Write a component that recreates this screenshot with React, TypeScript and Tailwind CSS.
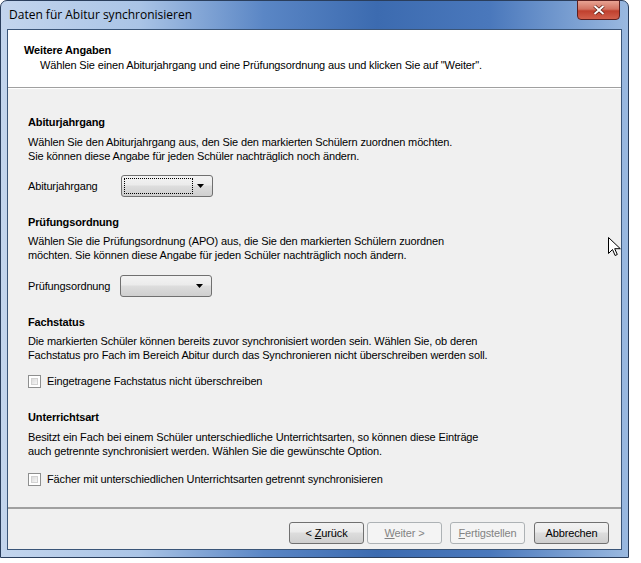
import React from "react";

const font = { fontFamily: '"Liberation Sans", Arial, sans-serif', letterSpacing: "-0.14px" };

function Combo({ focused }: { focused?: boolean }) {
  return (
    <div className="flex h-[22px] w-[92px] items-center rounded-[3px] border border-[#707070] bg-[linear-gradient(#f3f3f3,#ebebeb_45%,#dddddd_50%,#cfcfcf)] p-[2px]">
      <div className={`h-full flex-1 ${focused ? "border border-dotted border-black" : ""}`} />
      <svg width="17" height="16" viewBox="0 0 17 16">
        <path d="M4 6h7l-3.5 4z" fill="#000" />
      </svg>
    </div>
  );
}

function Check({ label }: { label: string }) {
  return (
    <div className="flex h-[14px] items-center gap-[6px]">
      <div className="h-[13px] w-[13px] border border-[#8e8f8f] bg-white p-[2px]">
        <div className="h-full w-full border border-[#d2d2d2] bg-[linear-gradient(135deg,#dcdcdc,#f6f6f6)]" />
      </div>
      <span>{label}</span>
    </div>
  );
}

function Button({ children, disabled, className = "" }: { children: React.ReactNode; disabled?: boolean; className?: string }) {
  return (
    <div
      className={`flex h-[22px] w-[75px] items-center justify-center rounded-[3px] border ${className} ${
        disabled
          ? "border-[#adb2b5] bg-[#f4f4f4] text-[#838383]"
          : "border-[#707070] bg-[linear-gradient(#f2f2f2,#ebebeb_45%,#dddddd_50%,#cfcfcf)] text-black"
      }`}
    >
      {children}
    </div>
  );
}

export default function App() {
  return (
    <div className="relative h-[563px] w-[641px] bg-white text-[11px] leading-[14px] text-black" style={font}>
      <div className="flex h-[558px] w-[629px] flex-col rounded-t-[7px] border border-[#2a3e5c] bg-[linear-gradient(90deg,#c3d5ed_0%,#aac4e6_22%,#5a86c5_42%,#3c6bb0_60%,#4a78bc_78%,#9ab9e0_100%)]">
        <div className="relative flex h-[28px] shrink-0 items-center pl-[8px]">
          <span className="text-[12px] text-black" style={{ fontFamily: '"Open Sans", sans-serif', letterSpacing: "0" }}>
            Daten für Abitur synchronisieren
          </span>
          <div className="absolute right-[8px] top-[-1px] flex h-[20px] w-[43px] items-center justify-center rounded-b-[4px] border border-[#5c2020] bg-[linear-gradient(#e8a393,#d27362_45%,#c0402e_55%,#d2604c)]">
            <svg width="12" height="10" viewBox="0 0 12 10">
              <path d="M1.5 1l9 8M10.5 1l-9 8" stroke="#5a1a10" strokeWidth="3.4" />
              <path d="M1.5 1l9 8M10.5 1l-9 8" stroke="#fff" strokeWidth="2" />
            </svg>
          </div>
        </div>
        <div className="mx-[6px] mb-[7px] flex flex-1 flex-col border border-[#3a5578] bg-[#f0f0f0]">
          <div className="h-[58px] shrink-0 border-b border-[#a0a0a0] bg-white pl-[16px] pt-[13px]">
            <div className="font-bold">Weitere Angaben</div>
            <div className="ml-[16px] mt-[1px]">Wählen Sie einen Abiturjahrgang und eine Prüfungsordnung aus und klicken Sie auf "Weiter".</div>
          </div>
          <div className="flex-1 border-t border-white pl-[20px] pt-[26px]">
            <div className="font-bold">Abiturjahrgang</div>
            <div className="mt-[6px]">
              Wählen Sie den Abiturjahrgang aus, den Sie den markierten Schülern zuordnen möchten.
              <br />
              Sie können diese Angabe für jeden Schüler nachträglich noch ändern.
            </div>
            <div className="mt-[12px] flex items-center">
              <span className="w-[93px]">Abiturjahrgang</span>
              <Combo focused />
            </div>

            <div className="mt-[18px] font-bold">Prüfungsordnung</div>
            <div className="mt-[6px] leading-[13.5px]">
              Wählen Sie die Prüfungsordnung (APO) aus, die Sie den markierten Schülern zuordnen
              <br />
              möchten. Sie können diese Angabe für jeden Schüler nachträglich noch ändern.
            </div>
            <div className="mt-[13px] flex items-center">
              <span className="w-[92px]">Prüfungsordnung</span>
              <Combo />
            </div>

            <div className="mt-[18px] font-bold">Fachstatus</div>
            <div className="mt-[6px] leading-[13.5px]">
              Die markierten Schüler können bereits zuvor synchronisiert worden sein. Wählen Sie, ob deren
              <br />
              Fachstatus pro Fach im Bereich Abitur durch das Synchronieren nicht überschreiben werden soll.
            </div>
            <div className="mt-[12px]">
              <Check label="Eingetragene Fachstatus nicht überschreiben" />
            </div>

            <div className="mt-[22px] font-bold">Unterrichtsart</div>
            <div className="mt-[6px]">
              Besitzt ein Fach bei einem Schüler unterschiedliche Unterrichtsarten, so können diese Einträge
              <br />
              auch getrennte synchronisiert werden. Wählen Sie die gewünschte Option.
            </div>
            <div className="mt-[14px]">
              <Check label="Fächer mit unterschiedlichen Unterrichtsarten getrennt synchronisieren" />
            </div>
          </div>
          <div className="flex h-[42px] shrink-0 items-start justify-end border-t-2 border-[#a0a0a0] pr-[12px] pt-[13px]">
            <Button>
              <span>
                &lt; <u>Z</u>urück
              </span>
            </Button>
            <Button disabled className="ml-[3px]">
              <span>
                <u>W</u>eiter &gt;
              </span>
            </Button>
            <Button disabled className="ml-[8px]">
              <span>
                <u>F</u>ertigstellen
              </span>
            </Button>
            <Button className="ml-[9px]">Abbrechen</Button>
          </div>
        </div>
      </div>
      <svg className="absolute left-[608px] top-[237px]" width="13" height="20" viewBox="0 0 13 20">
        <path d="M0.5 0.5v16l4-4 2.6 6 2.2-1-2.6-5.8h5.6z" fill="#fff" stroke="#000" strokeWidth="1" />
      </svg>
    </div>
  );
}
